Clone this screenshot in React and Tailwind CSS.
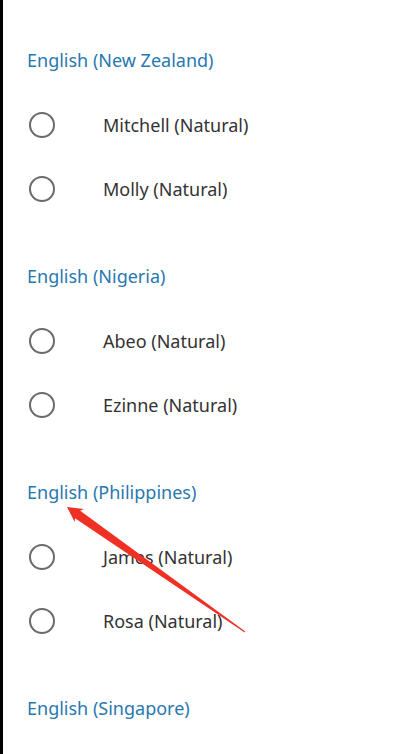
import React from "react";

const sections = [
  { title: "English (New Zealand)", voices: ["Mitchell (Natural)", "Molly (Natural)"] },
  { title: "English (Nigeria)", voices: ["Abeo (Natural)", "Ezinne (Natural)"] },
  { title: "English (Philippines)", voices: ["James (Natural)", "Rosa (Natural)"] },
  { title: "English (Singapore)", voices: [] },
];

const Radio = () => (
  <span className="w-[26px] h-[26px] rounded-full border-2 border-[#6b6b6b] shrink-0" />
);

const App = () => {
  return (
    <div
      className="relative w-[415px] h-[754px] overflow-hidden bg-white border-l-[3px] border-black"
      style={{ fontFamily: '"Noto Sans", "Open Sans", sans-serif' }}
    >
      <div className="mt-[5px]">
        {sections.map((s) => (
          <div key={s.title}>
            <div className="h-[88px] flex items-end pb-[21px] pl-[24px]">
              <span className="text-[18px] leading-[24px] text-[#2878b0]">{s.title}</span>
            </div>
            {s.voices.map((v) => (
              <div key={v} className="h-16 flex items-center pl-[26px]">
                <Radio />
                <span className="ml-[48px] text-[18px] leading-[24px] text-[#333]">{v}</span>
              </div>
            ))}
          </div>
        ))}
      </div>

      {/* annotation arrow */}
      <svg className="absolute left-[-3px] top-0 pointer-events-none" width="415" height="754">
        <polygon
          fill="#ee3124"
          points="67,507 83.9,509.1 80.2,510.8 245.3,631.6 244.7,632.4 75,518.2 74.7,522.1"
        />
      </svg>
    </div>
  );
};

export default App;
